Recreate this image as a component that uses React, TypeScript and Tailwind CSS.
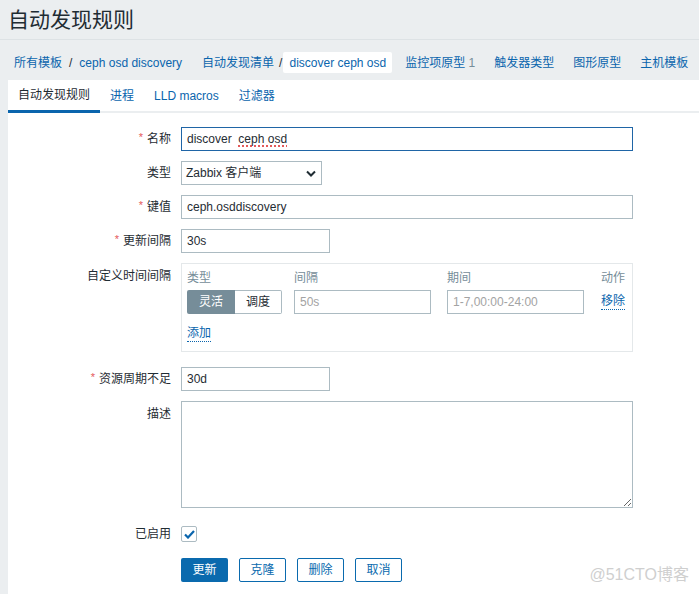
import React from 'react'

const font = { fontFamily: '"Liberation Sans", "Noto Sans CJK SC", sans-serif' }

const Req = () => <span className="text-[#e45959] mr-[4px] text-[11px] relative -top-[2px]">*</span>

const Row = ({ label, req, top, children, className = '' }: { label: string; req?: boolean; top?: boolean; children: React.ReactNode; className?: string }) => (
    <div className={`flex ${top ? 'items-start' : 'items-center'} ${className}`}>
        <div className={`w-[163px] shrink-0 text-right pr-0 ${top ? 'pt-[4px]' : ''}`}>
            {req && <Req />}
            {label}
        </div>
        <div className="ml-[10px]">{children}</div>
    </div>
)

const Input = ({ value, w, placeholder }: { value?: string; w: string; placeholder?: string }) => (
    <div className={`${w} h-[24px] border border-[#acbbc2] bg-white px-[5px] flex items-center ${placeholder ? 'text-[#a3a3a3]' : ''}`}>
        {value ?? placeholder}
    </div>
)

export default function App() {
    const crumbs = ['所有模板', '/', 'ceph osd discovery']
    return (
        <div style={font} className="relative w-[699px] h-[594px] overflow-hidden bg-[#ebeef0] text-[12px] text-[#1f2c33]">
            <header className="h-[40px] px-[8px] flex items-center border-b border-[#dde2e5]">
                <h1 className="text-[21px] leading-none text-[#1f2c33]">自动发现规则</h1>
            </header>
            <nav className="h-[40px] pt-[5px] flex items-center pl-[14px] text-[#0a65ad] whitespace-nowrap">
                <span>{crumbs[0]}</span>
                <span className="mx-[7px] text-[#1f2c33]">/</span>
                <span>{crumbs[2]}</span>
                <span className="ml-[20px]">自动发现清单</span>
                <span className="ml-[5px] mr-[1px] text-[#1f2c33]">/</span>
                <span className="bg-white h-[21px] px-[6px] flex items-center rounded-[2px]">discover ceph osd</span>
                <span className="ml-[13px]">监控项原型 <span className="text-[#768d99]">1</span></span>
                <span className="ml-[19px]">触发器类型</span>
                <span className="ml-[19px]">图形原型</span>
                <span className="ml-[19px]">主机模板</span>
            </nav>
            <main className="ml-[8px] bg-white h-[514px]">
                <div className="h-[33px] flex border-b-2 border-[#ebeef0]">
                    <div className="px-[10px] flex items-center border-b-[3px] border-[#0a65ad] -mb-[2px]">自动发现规则</div>
                    <div className="px-[10px] flex items-center text-[#0a65ad]">进程</div>
                    <div className="px-[10px] flex items-center text-[#0a65ad]">LLD macros</div>
                    <div className="px-[10px] flex items-center text-[#0a65ad]">过滤器</div>
                </div>

                <div className="pt-[14px] flex flex-col">
                    <Row label="名称" req>
                        <div className="w-[452px] h-[24px] border border-[#1f65a6] px-[5px] flex items-center whitespace-pre">
                            discover  <span className="underline decoration-dotted decoration-[#e45959] decoration-2 underline-offset-2">ceph osd</span>
                        </div>
                    </Row>
                    <Row label="类型" className="mt-[10px]">
                        <div className="w-[141px] h-[24px] border border-[#acbbc2] px-[4px] flex items-center justify-between">
                            <span>Zabbix 客户端</span>
                            <svg width="10" height="7" viewBox="0 0 10 7" className="mr-[1px]">
                                <path d="M1 1.5 L5 5.5 L9 1.5" stroke="#1f2c33" strokeWidth="2" fill="none" />
                            </svg>
                        </div>
                    </Row>
                    <Row label="键值" req className="mt-[10px]">
                        <Input w="w-[452px]" value="ceph.osddiscovery" />
                    </Row>
                    <Row label="更新间隔" req className="mt-[10px]">
                        <Input w="w-[149px]" value="30s" />
                    </Row>
                    <Row label="自定义时间间隔" top className="mt-[10px]">
                        <div className="w-[452px] h-[89px] border border-[#e4e8ea] pl-[5px] pt-[6px]">
                            <div className="flex text-[#768d99] h-[16px] items-center">
                                <div className="w-[107px]">类型</div>
                                <div className="w-[153px]">间隔</div>
                                <div className="w-[154px]">期间</div>
                                <div>动作</div>
                            </div>
                            <div className="flex items-center mt-[4px]">
                                <div className="w-[107px]">
                                    <div className="flex w-[95px] h-[24px]">
                                        <div className="w-[48px] bg-[#768d99] text-white flex items-center justify-center rounded-l-[2px]">灵活</div>
                                        <div className="w-[47px] border border-l-0 border-[#acbbc2] flex items-center justify-center rounded-r-[2px]">调度</div>
                                    </div>
                                </div>
                                <div className="w-[153px]"><Input w="w-[137px]" placeholder="50s" /></div>
                                <div className="w-[154px]"><Input w="w-[137px]" placeholder="1-7,00:00-24:00" /></div>
                                <div className="text-[#0a65ad] border-b border-dotted border-[#0a65ad] leading-[15px]">移除</div>
                            </div>
                            <div className="mt-[10px]">
                                <span className="text-[#0a65ad] border-b border-dotted border-[#0a65ad] inline-block leading-[15px]">添加</span>
                            </div>
                        </div>
                    </Row>
                    <Row label="资源周期不足" req className="mt-[15px]">
                        <Input w="w-[149px]" value="30d" />
                    </Row>
                    <Row label="描述" top className="mt-[10px]">
                        <textarea className="block w-[452px] h-[107px] border border-[#acbbc2] outline-none" />
                    </Row>
                    <Row label="已启用" className="mt-[17px]">
                        <div className="w-[16px] h-[16px] border border-[#acbbc2] rounded-[2px] flex items-center justify-center">
                            <svg width="11" height="9" viewBox="0 0 11 9">
                                <path d="M1 4.5 L4 7.5 L10 1" stroke="#0a65ad" strokeWidth="2.2" fill="none" />
                            </svg>
                        </div>
                    </Row>
                    <div className="flex gap-[11px] ml-[173px] mt-[15px]">
                        <div className="w-[47px] h-[24px] bg-[#0a6aae] text-white rounded-[2px] flex items-center justify-center">更新</div>
                        {['克隆', '删除', '取消'].map(t => (
                            <div key={t} className="w-[47px] h-[24px] border border-[#0a6aae] text-[#0a6aae] rounded-[2px] flex items-center justify-center">{t}</div>
                        ))}
                    </div>
                </div>
            </main>
            <div className="absolute right-[10px] bottom-[7px] text-[16px] text-[#cfcfcf]">@51CTO博客</div>
        </div>
    )
}
